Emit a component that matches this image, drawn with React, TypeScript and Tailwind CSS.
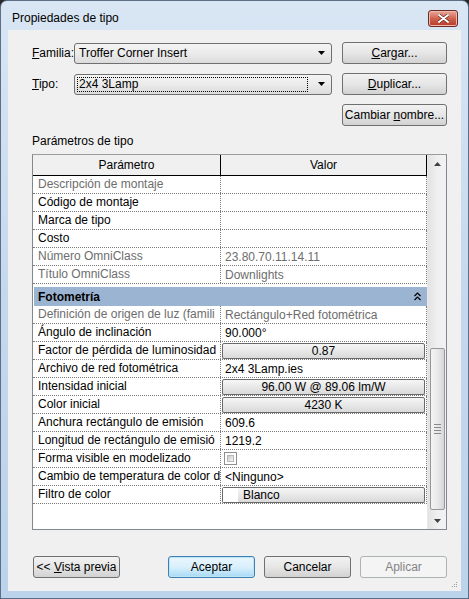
import React from 'react';

type Cell = {
  label: string;
  value?: string;
  readOnly?: boolean;
  kind?: 'text' | 'button' | 'check' | 'color';
};

const identityRows: Cell[] = [
  { label: 'Descripción de montaje', readOnly: true },
  { label: 'Código de montaje' },
  { label: 'Marca de tipo' },
  { label: 'Costo' },
  { label: 'Número OmniClass', value: '23.80.70.11.14.11', readOnly: true },
  { label: 'Título OmniClass', value: 'Downlights', readOnly: true },
];

const photometryRows: Cell[] = [
  { label: 'Definición de origen de luz (famili', value: 'Rectángulo+Red fotométrica', readOnly: true },
  { label: 'Ángulo de inclinación', value: '90.000°' },
  { label: 'Factor de pérdida de luminosidad', value: '0.87', kind: 'button' },
  { label: 'Archivo de red fotométrica', value: '2x4 3Lamp.ies' },
  { label: 'Intensidad inicial', value: '96.00 W @ 89.06 lm/W', kind: 'button' },
  { label: 'Color inicial', value: '4230 K', kind: 'button' },
  { label: 'Anchura rectángulo de emisión', value: '609.6' },
  { label: 'Longitud de rectángulo de emisió', value: '1219.2' },
  { label: 'Forma visible en modelizado', kind: 'check' },
  { label: 'Cambio de temperatura de color d', value: '<Ninguno>' },
  { label: 'Filtro de color', value: 'Blanco', kind: 'color' },
];

const btnBase =
  'h-[22px] w-[87px] rounded-[3px] border flex items-center justify-center text-[12px] leading-none';
const btnNormal =
  'border-[#707070] bg-gradient-to-b from-[#f2f2f2] via-[#e6e6e6] to-[#d2d2d2] text-black';

const WinButton: React.FC<{
  children: React.ReactNode;
  className?: string;
  variant?: 'normal' | 'default' | 'disabled';
}> = ({ children, className = '', variant = 'normal' }) => {
  let look = btnNormal;
  if (variant === 'default') {
    look =
      'border-[#3c7fb1] bg-gradient-to-b from-[#eaf6fd] via-[#d9f0fc] to-[#a7d9f5] text-black shadow-[inset_0_0_0_1px_#bfe4f8]';
  } else if (variant === 'disabled') {
    look = 'border-[#adb2b5] bg-[#f4f4f4] text-[#838383]';
  }
  return (
    <div className={`${btnBase} ${look} ${className}`}>
      <span className="whitespace-pre">{children}</span>
    </div>
  );
};

const DropArrow = () => (
  <svg width="7" height="4" viewBox="0 0 7 4">
    <path d="M0 0h7L3.5 4z" fill="#000" />
  </svg>
);

const Combo: React.FC<{ text: string; focused?: boolean }> = ({ text, focused }) => (
  <div className="h-[21px] w-[258px] rounded-[3px] border border-[#707070] bg-gradient-to-b from-[#f4f4f4] via-[#ebebeb] to-[#dcdcdc] flex items-center pl-[2px] pr-[6px]">
    <div
      className={`flex-1 h-[15px] flex items-center pl-[1px] mr-[10px] ${
        focused ? 'border border-dotted border-black' : 'border border-transparent'
      }`}
    >
      {text}
    </div>
    <DropArrow />
  </div>
);

const Row: React.FC<{ cell: Cell }> = ({ cell }) => {
  const tone = cell.readOnly ? 'text-[#6d6d6d]' : 'text-black';
  let value: React.ReactNode = (
    <span className={`pl-[4px] whitespace-nowrap ${tone}`}>{cell.value}</span>
  );
  if (cell.kind === 'button') {
    value = (
      <div className="mx-[1px] h-[16px] w-full rounded-[2px] border border-[#6a6a6a] bg-gradient-to-b from-[#f6f6f6] to-[#dadada] shadow-[0_1px_0_#9a9a9a] flex items-center justify-center">
        {cell.value}
      </div>
    );
  } else if (cell.kind === 'check') {
    value = (
      <div className="ml-[3px] h-[13px] w-[13px] border border-[#8f8f8f] bg-white p-[2px]">
        <div className="h-full w-full bg-gradient-to-br from-[#cbcbcb] to-[#f6f6f6] border border-[#b8b8b8]" />
      </div>
    );
  } else if (cell.kind === 'color') {
    value = (
      <div className="mx-[1px] h-[16px] w-full rounded-[2px] border border-[#6a6a6a] bg-gradient-to-b from-[#f6f6f6] to-[#dadada] shadow-[0_1px_0_#9a9a9a] flex items-center">
        <div className="h-full w-[15px] bg-white" />
        <span className="pl-[5px]">{cell.value}</span>
      </div>
    );
  }
  return (
    <div className="h-[18px] flex border-b border-r border-dotted border-[#7a7a7a]">
      <div
        className={`w-[188px] shrink-0 overflow-hidden whitespace-nowrap pl-[5px] leading-[17px] border-r border-dotted border-[#7a7a7a] ${tone}`}
      >
        {cell.label}
      </div>
      <div className="flex-1 flex items-center overflow-hidden">{value}</div>
    </div>
  );
};

const ScrollBar = () => (
  <div className="w-[19px] shrink-0 flex flex-col items-center bg-gradient-to-r from-[#e3e3e3] via-[#efefef] to-[#f2f2f2] border-l border-[#e8e8e8]">
    <div className="h-[17px] w-full flex items-center justify-center">
      <svg width="7" height="4" viewBox="0 0 7 4">
        <path d="M3.5 0L7 4H0z" fill="#404040" />
      </svg>
    </div>
    <div className="h-[176px]" />
    <div className="h-[162px] w-[15px] rounded-[2px] border border-[#979797] bg-gradient-to-r from-[#f4f4f4] via-[#e9e9e9] to-[#d6d6d6] flex flex-col items-center justify-center gap-[2px]">
      <div className="h-px w-[7px] bg-[#8a8a8a]" />
      <div className="h-px w-[7px] bg-[#8a8a8a]" />
      <div className="h-px w-[7px] bg-[#8a8a8a]" />
      <div className="h-px w-[7px] bg-[#8a8a8a]" />
    </div>
    <div className="flex-1" />
    <div className="h-[17px] w-full flex items-center justify-center">
      <svg width="7" height="4" viewBox="0 0 7 4">
        <path d="M0 0h7L3.5 4z" fill="#404040" />
      </svg>
    </div>
  </div>
);

export default function App() {
  return (
    <div className="w-[469px] h-[599px] bg-[#2a2a2a] font-['Liberation_Sans',Arial,sans-serif] text-[12px] text-black">
      <div className="h-full w-full rounded-t-[7px] border border-[#5c6f86] bg-gradient-to-b from-[#d9e6f4] via-[#c4d8ed] to-[#bcd3ec] flex flex-col px-[7px] pb-[7px]">
        {/* Title bar */}
        <div className="h-[29px] shrink-0 flex items-start justify-between">
          <div className="pt-[10px] pl-[4px] leading-[15px] text-black">Propiedades de tipo</div>
          <div className="mt-[9px] mr-[3px] h-[17px] w-[30px] rounded-[3px] border border-[#6b2a22] bg-gradient-to-b from-[#e9a99c] via-[#d0634f] to-[#b5382a] flex items-center justify-center shadow-[inset_0_0_0_1px_#f0b9ad]">
            <svg width="11" height="9" viewBox="0 0 11 9">
              <path
                d="M1 1l9 7M10 1L1 8"
                stroke="#5a1c14"
                strokeWidth="3.2"
                strokeLinecap="round"
              />
              <path
                d="M1 1l9 7M10 1L1 8"
                stroke="#ffffff"
                strokeWidth="2"
                strokeLinecap="round"
              />
            </svg>
          </div>
        </div>

        {/* Client area */}
        <div className="flex-1 bg-[#f0f0f0] flex flex-col pl-[24px] pr-[14px]">
          <div className="mt-[12px] flex items-center">
            <div className="w-[42px]">
              <u>F</u>amilia:
            </div>
            <Combo text="Troffer Corner Insert" />
            <WinButton className="ml-[10px] w-[105px]">
              <u>C</u>argar...
            </WinButton>
          </div>
          <div className="mt-[9px] flex items-center">
            <div className="w-[42px]">
              <u>T</u>ipo:
            </div>
            <Combo text="2x4 3Lamp" focused />
            <WinButton className="ml-[10px] w-[105px]">
              <u>D</u>uplicar...
            </WinButton>
          </div>
          <div className="mt-[9px] flex justify-end">
            <WinButton className="w-[105px]">
              Cambiar <u>n</u>ombre...
            </WinButton>
          </div>
          <div className="mt-[8px] leading-[15px]">Parámetros de tipo</div>

          {/* Property grid */}
          <div className="mt-[5px] h-[376px] w-[415px] border border-[#828790] border-t-[#9c9c9c] flex bg-white">
            <div className="w-[394px] flex flex-col">
              <div className="h-[21px] flex bg-[#f0f0f0] border-b border-r border-black">
                <div className="w-[188px] border-r border-black flex items-center justify-center">
                  Parámetro
                </div>
                <div className="flex-1 flex items-center justify-center">Valor</div>
              </div>
              {identityRows.map((c) => (
                <Row key={c.label} cell={c} />
              ))}
              <div className="h-[22px] pt-[3px]">
                <div className="h-[19px] ml-[1px] bg-[#9bb4d1] flex items-center justify-between pl-[4px] pr-[6px]">
                  <span className="font-bold">Fotometría</span>
                  <svg width="7" height="9" viewBox="0 0 7 9">
                    <path d="M0.5 4L3.5 1L6.5 4M0.5 8L3.5 5L6.5 8" stroke="#000" strokeWidth="1.2" fill="none" />
                  </svg>
                </div>
              </div>
              {photometryRows.map((c) => (
                <Row key={c.label} cell={c} />
              ))}
            </div>
            <ScrollBar />
          </div>

          {/* Footer buttons */}
          <div className="mt-[26px] flex pl-[1px]">
            <WinButton>
              &lt;&lt; <u>V</u>ista previa
            </WinButton>
            <WinButton variant="default" className="ml-[48px]">
              Aceptar
            </WinButton>
            <WinButton className="ml-[9px]">Cancelar</WinButton>
            <WinButton variant="disabled" className="ml-[9px]">
              Aplicar
            </WinButton>
          </div>
          <div className="flex-1 flex items-end justify-end -mr-[11px] pb-[3px]">
            <svg width="6" height="6" viewBox="0 0 6 6">
              <rect x="4" y="0" width="1" height="1" fill="#a0a0a0" />
              <rect x="2" y="2" width="1" height="1" fill="#a0a0a0" />
              <rect x="4" y="2" width="1" height="1" fill="#a0a0a0" />
              <rect x="0" y="4" width="1" height="1" fill="#a0a0a0" />
              <rect x="2" y="4" width="1" height="1" fill="#a0a0a0" />
              <rect x="4" y="4" width="1" height="1" fill="#a0a0a0" />
            </svg>
          </div>
        </div>
      </div>
    </div>
  );
}
